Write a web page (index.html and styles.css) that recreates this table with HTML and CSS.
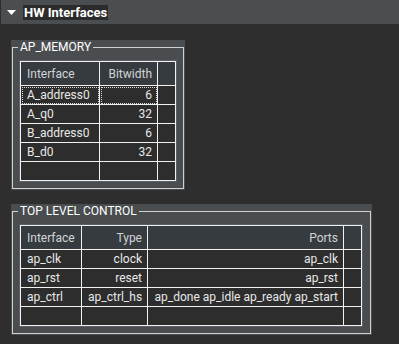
FILE: index.html
```html
<!DOCTYPE html>
<html>
<head>
<meta charset="utf-8">
<title>HW Interfaces</title>
<link rel="stylesheet" href="styles.css">
</head>
<body>
  <div class="section-bar">
    <svg class="caret" width="9" height="5" viewBox="0 0 9 5"><polygon points="0,0 9,0 4.5,5" fill="#ffffff"/></svg>
    <span class="section-title">HW Interfaces</span>
  </div>

  <div class="content">
    <div class="group">
      <div class="frame">
        <span class="legend">AP_MEMORY</span>
        <table class="grid grid-mem">
          <colgroup>
            <col class="w79"><col class="w58"><col class="w18">
          </colgroup>
          <tr class="head">
            <th class="left">Interface</th><th class="right">Bitwidth</th><th></th>
          </tr>
          <tr class="current">
            <td class="left focus">A_address0</td><td class="right focus">6</td><td></td>
          </tr>
          <tr><td class="left">A_q0</td><td class="right">32</td><td></td></tr>
          <tr><td class="left">B_address0</td><td class="right">6</td><td></td></tr>
          <tr><td class="left">B_d0</td><td class="right">32</td><td></td></tr>
          <tr><td></td><td></td><td></td></tr>
        </table>
      </div>
    </div>

    <div class="group">
      <div class="frame frame-wide">
        <span class="legend">TOP LEVEL CONTROL</span>
        <table class="grid grid-ctrl">
          <colgroup>
            <col class="w61"><col class="w66"><col class="w196"><col class="w18">
          </colgroup>
          <tr class="head">
            <th class="left">Interface</th><th class="right">Type</th><th class="right">Ports</th><th></th>
          </tr>
          <tr><td class="left">ap_clk</td><td class="right">clock</td><td class="right">ap_clk</td><td></td></tr>
          <tr><td class="left">ap_rst</td><td class="right">reset</td><td class="right">ap_rst</td><td></td></tr>
          <tr><td class="left">ap_ctrl</td><td class="right">ap_ctrl_hs</td><td class="right">ap_done ap_idle ap_ready ap_start</td><td></td></tr>
          <tr><td></td><td></td><td></td><td></td></tr>
        </table>
      </div>
    </div>
  </div>
</body>
</html>
```

FILE: styles.css
```css
html, body {
  margin: 0;
  padding: 0;
  background: #2e2e2e;
  font-family: Roboto, "Noto Sans", sans-serif;
  color: #e4e4e4;
}

/* collapsible section header */
.section-bar {
  height: 24px;
  margin-left: 1px;
  background: #4b4e51;
  display: flex;
  align-items: center;
  box-sizing: border-box;
  padding-left: 6px;
}

.caret {
  display: block;
  margin-right: 7px;
}

.section-title {
  background: #2b2b2b;
  color: #ffffff;
  font-weight: bold;
  font-size: 13px;
  line-height: 15px;
  padding: 0 1px;
}

.content {
  display: flex;
  flex-direction: column;
  align-items: flex-start;
  gap: 14px;
  padding: 16px 0 0 11px;
}

/* group box */
.group {
  background: #4a4d50;
  padding: 7px 1px 1px 1px;
}

.frame {
  position: relative;
  border: 1px solid #cfd0d1;
  padding: 13px 7px 7px 7px;
}

.frame-wide {
  padding-right: 8px;
}

/* title sitting on the frame's top line */
.legend {
  position: absolute;
  top: -8px;
  left: 5px;
  padding: 0 2px;
  background: #4a4d50;
  color: #ffffff;
  font-size: 12px;
  line-height: 15px;
}

/* data grids */
.grid {
  border-collapse: separate;
  border-spacing: 0;
  table-layout: fixed;
  border-top: 1px solid #f2f2f2;
  border-left: 1px solid #f2f2f2;
  box-shadow: 0 0 0 1px #5c6064;
  font-size: 12px;
}

.grid-mem { width: 156px; }
.grid-ctrl { width: 342px; }

.w79 { width: 79px; }
.w58 { width: 58px; }
.w18 { width: 18px; }
.w61 { width: 61px; }
.w66 { width: 66px; }
.w196 { width: 196px; }

.grid th,
.grid td {
  box-sizing: border-box;
  border-right: 1px solid #f2f2f2;
  border-bottom: 1px solid #f2f2f2;
  padding: 0 5px 0 6px;
  white-space: nowrap;
  overflow: hidden;
  line-height: 16px;
  font-weight: normal;
}

.grid th {
  height: 24px;
  background: #363b3f;
  color: #d2d4d6;
}

.grid td {
  height: 19px;
  background: #2d2d2d;
  color: #e8e8e8;
}

.left { text-align: left; }
.right { text-align: right; }

/* keyboard focus on the current row */
.focus {
  outline: 1px dotted #d8d8d8;
  outline-offset: -2px;
}
```
